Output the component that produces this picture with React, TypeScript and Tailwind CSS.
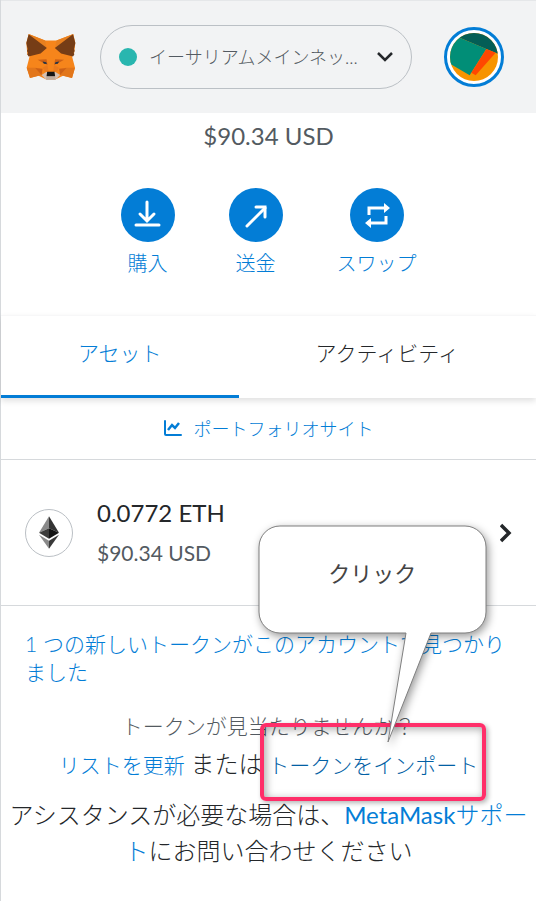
import type { ReactNode } from 'react'

function FoxLogo() {
  return (
    <svg viewBox="79 101 149 139" className="h-[46px] w-[50px]" aria-hidden="true">
      <path
        fill="#f6851b"
        d="M86 101L136 121H170L221 101L227 128L223 163L217 168L226 203L217 234L190 227L165 239H141L116 227L90 234L80 203L89 168L82 163L79 128Z"
      />
      <path fill="#e8801f" d="M86 101L136 121L140 143ZM221 101L170 121L166 143Z" />
      <path fill="#763d16" d="M86 102L141 143L122 160L86 169L82 163L84 158L81 152L83 146L79 128ZM220 102L165 143L184 160L220 169L224 163L222 158L225 152L223 146L227 128Z" />
      <path fill="#e2761b" d="M80 203H109L127 224L116 227L90 234ZM226 203H197L179 224L190 227L217 234Z" />
      <path fill="#cd6116" d="M106 204L128 206L125 225ZM200 204L178 206L181 225Z" />
      <path fill="#cd6116" d="M113 179L140 177L143 195L129 188ZM193 179L166 177L163 195L177 188Z" />
      <path fill="#e4751f" d="M140 177L146 214H135L128 203L143 195ZM166 177L160 214H171L178 203L163 195Z" opacity=".6" />
      <path fill="#233447" d="M128 184L139 186L141 192L132 191ZM178 184L167 186L165 192L174 191Z" />
      <path fill="#d7c1b3" d="M125 225L139 216H167L181 225L167 239H139Z" />
      <path fill="#c0ad9e" d="M139 231H167V239H139Z" />
      <path fill="#161616" d="M142 215H164L166 229H140Z" />
    </svg>
  )
}

function AccountAvatar() {
  return (
    <svg viewBox="540 99 144 144" className="size-12 rounded-full" aria-hidden="true">
      <path fill="#f79400" d="M540 99h144v144H540z" />
      <path fill="#035e56" d="M540 99h144v62l-35-14-80-34z" />
      <path fill="#018e77" d="M569 113l80 34-50 79-59-35v-78z" />
      <path fill="#ff4700" d="M649 147l28 11-60 68-13-8z" />
    </svg>
  )
}

function EthIcon() {
  return (
    <svg viewBox="0 0 60 98" className="h-[33px] w-5" aria-hidden="true">
      <path fill="#8a8a8a" d="M30 0v36L0 50z" />
      <path fill="#343434" d="M30 0v36l30 14z" />
      <path fill="#3c3c3b" d="M30 36v32L0 50z" />
      <path fill="#141414" d="M30 36v32l30-18z" />
      <path fill="#8a8a8a" d="M0 56l30 18v24z" />
      <path fill="#393939" d="M60 56L30 74v24z" />
    </svg>
  )
}

function BuyIcon() {
  return (
    <svg viewBox="0 0 54 54" className="size-full" fill="none" stroke="#fff" strokeWidth="3" aria-hidden="true">
      <path d="M26 14v17M19 26l7 7 7-7" strokeLinecap="round" />
      <path d="M15 37h23" strokeLinecap="round" />
    </svg>
  )
}

function SendIcon() {
  return (
    <svg viewBox="0 0 54 54" className="size-full" fill="none" stroke="#fff" strokeWidth="3" aria-hidden="true">
      <path d="M18 38l18-18" strokeLinecap="round" />
      <path d="M27 19h9v10" strokeLinecap="round" />
    </svg>
  )
}

function SwapIcon() {
  return (
    <svg viewBox="0 0 54 54" className="size-full" fill="none" stroke="#fff" strokeWidth="3" aria-hidden="true">
      <path d="M19 27v-7h17M36 28v7H19" />
      <path fill="#fff" stroke="none" d="M34 15l6 5-6 5zM21 30l-6 5 6 5z" />
    </svg>
  )
}

type ActionProps = { label: string; children: ReactNode }

function ActionButton({ label, children }: ActionProps) {
  return (
    <button type="button" className="flex flex-col items-center gap-[7px] text-xl leading-7 text-[#037dd6]">
      <span className="size-[54px] rounded-full bg-[#037dd6]">{children}</span>
      {label}
    </button>
  )
}

function ClickCallout() {
  return (
    <div className="pointer-events-none absolute -top-[225px] -left-4 h-[230px] w-[240px]">
      <svg viewBox="0 0 240 230" className="absolute inset-0 size-full drop-shadow-[2px_3px_4px_rgba(0,0,0,0.4)]" aria-hidden="true">
        <path
          fill="#fff"
          stroke="#7f7f7f"
          d="M28 6h185a21 21 0 0 1 21 21v65a21 21 0 0 1-21 21h-34L136 222 154 113H28a21 21 0 0 1-21-21V27a21 21 0 0 1 21-21z"
        />
      </svg>
      <span className="absolute top-9 left-0 w-full text-center text-[22px] leading-9 font-normal text-[#444]">
        クリック
      </span>
    </div>
  )
}

export default function App() {
  return (
    <div className="min-h-screen border-l border-[#d6d9dc] bg-white font-[Lato,'Noto_Sans_CJK_JP',sans-serif] font-light text-[#24272a]">
      <header className="flex items-center border-t border-[#e5e7e9] bg-[#f2f3f4] py-6 pr-8 pl-[25px]">
        <FoxLogo />
        <button
          type="button"
          className="ml-6 flex h-16 min-w-0 flex-1 items-center rounded-full border border-[#bbc0c5] pr-[18px] pl-[18px] text-lg text-[#535a61]"
        >
          <span className="mr-3 size-[18px] shrink-0 rounded-full bg-[#29b6af]" />
          <span className="truncate">イーサリアムメインネッ...</span>
          <svg viewBox="0 0 16 10" className="ml-auto h-[10px] w-4 shrink-0" fill="none" stroke="#24272a" strokeWidth="2.5" aria-hidden="true">
            <path d="M1 1l7 7 7-7" />
          </svg>
        </button>
        <button
          type="button"
          aria-label="アカウント"
          className="ml-8 flex size-[60px] shrink-0 items-center justify-center rounded-full border-3 border-[#037dd6] bg-white"
        >
          <AccountAvatar />
        </button>
      </header>

      <main>
        <p className="pt-[7px] text-center text-2xl leading-8 font-normal text-[#535a61]">$90.34 USD</p>

        <div className="flex justify-center gap-[54px] pt-9 pb-[38px]">
          <ActionButton label="購入">
            <BuyIcon />
          </ActionButton>
          <ActionButton label="送金">
            <SendIcon />
          </ActionButton>
          <ActionButton label="スワップ">
            <SwapIcon />
          </ActionButton>
        </div>

        <div role="tablist" className="flex border-t border-[#f7f7f8] text-[21px] leading-8 shadow-[0_3px_6px_rgba(0,0,0,0.12)]">
          <button
            type="button"
            role="tab"
            aria-selected="true"
            className="flex-auto border-b-3 border-[#037dd6] pt-[21px] pb-[26px] text-[#037dd6]"
          >
            アセット
          </button>
          <button
            type="button"
            role="tab"
            aria-selected="false"
            className="flex-auto border-b-3 border-transparent pt-[21px] pb-[26px]"
          >
            アクティビティ
          </button>
        </div>

        <div className="flex h-[62px] items-center justify-center border-b border-[#d6d9dc]">
          <a href="#portfolio" className="flex items-center gap-3 text-lg text-[#037dd6]">
            <svg viewBox="0 0 18 17" className="h-[17px] w-[18px]" fill="none" stroke="currentColor" strokeWidth="2" aria-hidden="true">
              <path d="M1 1v13q0 1 1 1h15" strokeLinecap="round" />
              <path d="M4 10l4-5 3 3 4-5" strokeWidth="2.5" />
            </svg>
            ポートフォリオサイト
          </a>
        </div>

        <button
          type="button"
          className="flex h-[146px] w-full items-center border-b border-[#d6d9dc] pr-6 pl-6 text-left font-normal"
        >
          <span className="flex size-12 items-center justify-center rounded-full border border-[#bbc0c5]">
            <EthIcon />
          </span>
          <span className="ml-6 flex flex-1 flex-col gap-2">
            <span className="text-2xl leading-8">0.0772 ETH</span>
            <span className="text-[21px] leading-8 text-[#535a61]">$90.34 USD</span>
          </span>
          <svg viewBox="0 0 12 20" className="h-5 w-3" fill="none" stroke="#24272a" strokeWidth="3.5" aria-hidden="true">
            <path d="M1 2l8 8-8 8" />
          </svg>
        </button>

        <div className="px-6 pt-6 text-[21px] leading-7">
          <a href="#new-tokens" className="text-[#037dd6]">
            1 つの新しいトークンがこのアカウントで見つかりました
          </a>
        </div>

        <div className="pt-[22px] text-center text-[21px]">
          <p className="leading-9 text-[#535a61]">トークンが見当たりませんか？</p>
          <p className="leading-10">
            <a href="#refresh" className="text-[#037dd6]">
              リストを更新
            </a>{' '}
            <span className="text-2xl leading-10">または</span>{' '}
            <span className="relative inline-block whitespace-nowrap">
              <a href="#import" className="text-[#0260a4]">
                トークンをインポート
              </a>
              <span className="pointer-events-none absolute -inset-x-2 -top-[22px] -bottom-4 rounded-md border-4 border-[#ff2e69] shadow-[2px_2px_5px_rgba(0,0,0,0.3),inset_2px_2px_8px_rgba(0,0,0,0.35)]" />
              <ClickCallout />
            </span>
          </p>
        </div>

        <p className="px-1 pt-3 pb-8 text-center text-2xl leading-9">
          アシスタンスが必要な場合は、
          <a href="#support" className="text-[#037dd6]">
            <span className="font-normal">MetaMask</span>サポート
          </a>
          にお問い合わせください
        </p>
      </main>
    </div>
  )
}
